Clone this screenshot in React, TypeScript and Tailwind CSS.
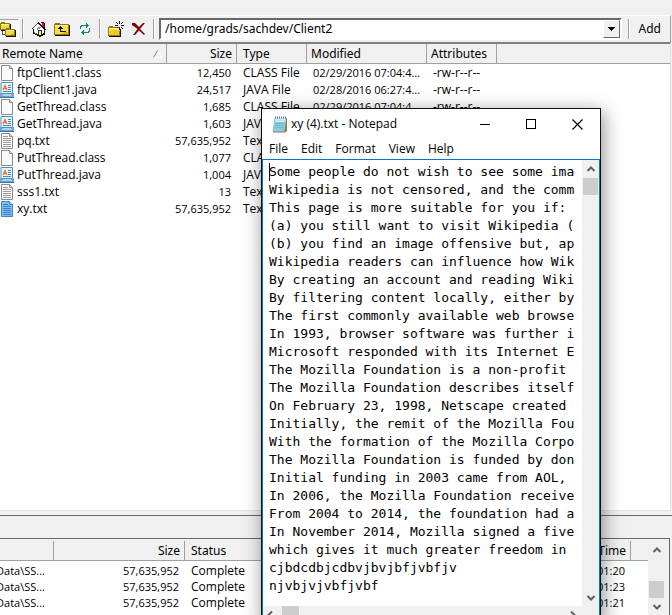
import React from 'react';

type FileKind = 'blank' | 'java' | 'text' | 'selected';

type RemoteFile = {
  name: string;
  kind: FileKind;
  size: string;
  type: string;
  modified: string;
};

const files: RemoteFile[] = [
  { name: 'ftpClient1.class', kind: 'blank', size: '12,450', type: 'CLASS File', modified: '02/29/2016 07:04:4...' },
  { name: 'ftpClient1.java', kind: 'java', size: '24,517', type: 'JAVA File', modified: '02/28/2016 06:27:4...' },
  { name: 'GetThread.class', kind: 'blank', size: '1,685', type: 'CLASS File', modified: '02/29/2016 07:04:4...' },
  { name: 'GetThread.java', kind: 'java', size: '1,603', type: 'JAVA File', modified: '' },
  { name: 'pq.txt', kind: 'text', size: '57,635,952', type: 'Text', modified: '' },
  { name: 'PutThread.class', kind: 'blank', size: '1,077', type: 'CLASS', modified: '' },
  { name: 'PutThread.java', kind: 'java', size: '1,004', type: 'JAVA File', modified: '' },
  { name: 'sss1.txt', kind: 'text', size: '13', type: 'Text', modified: '' },
  { name: 'xy.txt', kind: 'selected', size: '57,635,952', type: 'Text', modified: '' },
];

const transfers = ['01:20', '01:23', '01:21'];

const documentText = [
  'Some people do not wish to see some ima',
  'Wikipedia is not censored, and the comm',
  'This page is more suitable for you if:',
  '(a) you still want to visit Wikipedia (',
  '(b) you find an image offensive but, ap',
  'Wikipedia readers can influence how Wik',
  'By creating an account and reading Wiki',
  'By filtering content locally, either by',
  'The first commonly available web browse',
  'In 1993, browser software was further i',
  'Microsoft responded with its Internet E',
  'The Mozilla Foundation is a non-profit',
  'The Mozilla Foundation describes itself',
  'On February 23, 1998, Netscape created',
  'Initially, the remit of the Mozilla Fou',
  'With the formation of the Mozilla Corpo',
  'The Mozilla Foundation is funded by don',
  'Initial funding in 2003 came from AOL,',
  'In 2006, the Mozilla Foundation receive',
  'From 2004 to 2014, the foundation had a',
  'In November 2014, Mozilla signed a five',
  'which gives it much greater freedom in',
  'cjbdcdbjcdbvjbvjbfjvbfjv',
  'njvbjvjvbfjvbf',
].join('\n');

function FileIcon({ kind }: { kind: FileKind }) {
  if (kind === 'java') {
    return (
      <svg width="14" height="16" viewBox="0 0 14 16" aria-hidden="true">
        <path d="M1 .5h11.500v11H1z" fill="#eaf5fd" stroke="#4a8fc4" />
        <path d="M0 11h2l1 1.500h8L12 11h2v4H0z" fill="#6aa6d3" />
        <path d="M0 15h14v1H0z" fill="#3b719f" />
        <path d="M2 13.500h10" stroke="#a9d0ec" />
        <path d="M3 8l2-4.500L7 8M4 6.500h2" fill="none" stroke="#f07818" strokeWidth="1.300" />
        <path d="M8 3.500h3M8 5.500h3M8 7.500h3M3 9.500h8" stroke="#4f86b8" />
      </svg>
    );
  }
  const selected = kind === 'selected';
  const edge = selected ? '#3d86cc' : '#8a8a8a';
  return (
    <svg width="14" height="16" viewBox="0 0 14 16" aria-hidden="true">
      <path d="M1.500 .5h8l3 3v12h-11z" fill={selected ? '#7fbdf2' : '#fbfbfb'} stroke={edge} />
      <path d="M9.500 .5v3h3" fill={selected ? '#b9dcf8' : '#ddd'} stroke={edge} />
      {kind !== 'blank' && (
        <path
          d="M3 3.500h5M3 5.500h8M3 7.500h8M3 9.500h8M3 11.500h8M3 13.500h8"
          stroke={selected ? '#3f82bd' : '#9b9b9b'}
          shapeRendering="crispEdges"
        />
      )}
    </svg>
  );
}

function FoldersIcon() {
  return (
    <svg width="16" height="16" viewBox="0 0 16 16" shapeRendering="crispEdges" aria-hidden="true">
      <path d="M0 2h1V1h4v1h5v7H0z" fill="#8c7a10" />
      <path d="M1 3h8v5H1z" fill="#f8d93a" />
      <path d="M1 3h8v1H1z" fill="#fff3a0" />
      <path d="M10 3h1v7H1V9h9z" fill="#111" />
      <path d="M5 8h1V7h4v1h5v7H5z" fill="#8c7a10" />
      <path d="M6 9h8v5H6z" fill="#f8d93a" />
      <path d="M6 9h8v1H6z" fill="#fff3a0" />
      <path d="M11 13h3v1h-3z" fill="#d8a800" />
      <path d="M15 9h1v7H6v-1h9z" fill="#111" />
      <path d="M2 10h1v3h2v1H2z" fill="#555" />
    </svg>
  );
}

function HomeIcon() {
  return (
    <svg width="16" height="16" viewBox="0 0 16 16" shapeRendering="crispEdges" aria-hidden="true">
      <path d="M10 1h3v1h-3zM13 2h1v5h-1z" fill="#500010" />
      <path d="M11 2h2v5h-2z" fill="#d81038" />
      <path d="M7 2h1v1h1v1h1v1h1v1h1v1h1v7h-2v1H7v-1H5v-1H3V7h1V6h1V5h1V4h1z" fill="#fff" />
      <path
        d="M7 1h1v1h1v1h1v1h1v1h1v1h1v1h1v1h1v1h-1v5h-2v1h-2v1H8v-1H6v-1H4v-1H2V8H1V7h1v1h1v4h2v1h2v1h3v-1h2v-1h1V8h-1V7h-1V6h-1V5H9V4H8V3H7z"
        fill="#111"
      />
      <path d="M6 2h1v1H6zM5 3h1v1H5zM4 4h1v1H4zM3 5h1v1H3zM2 6h1v1H2z" fill="#555" />
      <path d="M7 6h3v1H7zM6 7h1v2H6zM7 7h2v1H7z" fill="#909090" />
      <path d="M7 9h4v5H7z" fill="#222" />
      <path d="M8 10h2v4H8z" fill="#fff27a" />
      <path d="M3 11h1v1H3zM4 12h2v1H4z" fill="#4ca030" />
    </svg>
  );
}

function FolderUpIcon() {
  return (
    <svg width="16" height="16" viewBox="0 0 16 16" shapeRendering="crispEdges" aria-hidden="true">
      <path d="M0 3h1V2h5v1h9v11H0z" fill="#8c7a10" />
      <path d="M1 4h13v9H1z" fill="#f8de48" />
      <path d="M1 4h13v1H1z" fill="#fff5b0" />
      <path d="M10 11h4v2H8v-1h2z" fill="#e8b800" />
      <path d="M15 4h1v11H1v-1h14z" fill="#111" />
      <path d="M6 5h1v1h1v1h1v1H7v2h5v1H6V8H4V7h1V6h1z" fill="#111" />
    </svg>
  );
}

function RefreshIcon() {
  return (
    <svg width="12" height="12" viewBox="0 0 12 12" shapeRendering="crispEdges" aria-hidden="true">
      <path
        d="M2 2h5V0h1v1h1v1h1v1H9v1H8v1H7V3H3v1H2v2H1V3h1zM10 5h1v4h-1v1H5v2H4v-1H3v-1H2V9h1V8h1V7h1v2h4V8h1z"
        fill="#108888"
      />
    </svg>
  );
}

function NewFolderIcon() {
  return (
    <svg width="16" height="16" viewBox="0 0 16 16" shapeRendering="crispEdges" aria-hidden="true">
      <path d="M0 6h1V5h4v1h7v9H0z" fill="#8c7a10" />
      <path d="M1 7h10v7H1z" fill="#f8de48" />
      <path d="M1 7h10v1H1z" fill="#fff5b0" />
      <path d="M3 9h9l-2 5H1z" fill="#f3c820" />
      <path d="M12 8h1v8H1v-1h11z" fill="#111" />
      <path
        d="M11 0h1v3h-1zM11 6h1v3h-1zM7 4h3v1H7zM13 4h3v1h-3zM8 1h1v1H8zM9 2h1v1H9zM14 1h1v1h-1zM13 2h1v1h-1zM9 6h1v1H9zM13 6h1v1h-1zM14 7h1v1h-1z"
        fill="#111"
      />
    </svg>
  );
}

function DeleteIcon() {
  return (
    <svg width="14" height="13" viewBox="0 0 14 13" aria-hidden="true">
      <path d="M0 0h3l4 4 4-4h2L8 6l5 5-1 1-5-4.500L3 12H1l4.500-6L0 2z" fill="#800008" />
    </svg>
  );
}

function NotepadIcon() {
  return (
    <svg width="16" height="17" viewBox="0 0 16 17" aria-hidden="true">
      <path d="M3 2h12v13l-2 1.500H1z" fill="#8a7a50" />
      <path d="M2.500 2h12l-2 13.500H.5z" fill="#8ecbdc" />
      <path d="M3.500 2h10l-.5 4H3z" fill="#c9e9f1" />
      <path d="M3 7.500h9M2.500 9.500h9M2.500 11.500h9" stroke="#68afc6" strokeWidth=".6" />
      <path d="M3 1.500h12" stroke="#5c6a70" strokeWidth="2" strokeDasharray="1 1" />
    </svg>
  );
}

function Chevron({ direction }: { direction: 'up' | 'down' | 'left' | 'right' }) {
  const paths = {
    up: 'M1.500 7L5 3.500 8.500 7',
    down: 'M1.500 3L5 6.500 8.500 3',
    left: 'M7 1.500L3.500 5 7 8.500',
    right: 'M3 1.500L6.500 5 3 8.500',
  };
  return (
    <svg width="10" height="10" viewBox="0 0 10 10" aria-hidden="true">
      <path d={paths[direction]} fill="none" stroke="#5f5f5f" strokeWidth="2" />
    </svg>
  );
}

function Separator() {
  return <div className="h-5 w-0.5 shrink-0 border-l border-[#a0a0a0] bg-white" />;
}

function ToolButton({ label, children }: { label: string; children: React.ReactNode }) {
  return (
    <button type="button" aria-label={label} className="flex h-5 w-[23px] shrink-0 items-center justify-center">
      {children}
    </button>
  );
}

function Toolbar() {
  return (
    <div className="mr-px flex h-[27px] items-center border-t border-r border-t-white border-r-[#a0a0a0]">
      <button
        type="button"
        aria-label="Synchronize folders"
        className="flex h-5 w-[19px] shrink-0 items-center border-t border-r border-b border-t-[#a0a0a0] border-r-white border-b-white bg-[#f8f8f8]"
      >
        <FoldersIcon />
      </button>
      <div className="ml-[3px] flex items-center gap-[3px]">
        <Separator />
        <div className="flex items-center">
          <ToolButton label="Home"><HomeIcon /></ToolButton>
          <ToolButton label="Up one level"><FolderUpIcon /></ToolButton>
          <ToolButton label="Refresh"><RefreshIcon /></ToolButton>
        </div>
        <Separator />
        <div className="flex items-center">
          <ToolButton label="New folder"><NewFolderIcon /></ToolButton>
          <ToolButton label="Delete"><DeleteIcon /></ToolButton>
        </div>
        <Separator />
      </div>
      <div className="relative ml-1 h-[22px] flex-1 border-2 border-t-[#696969] border-r-white border-b-white border-l-[#696969] bg-white">
        <select
          aria-label="Remote path"
          className="block h-full w-full appearance-none bg-white pl-1 font-['Noto_Sans',sans-serif] text-[12px] leading-4 outline-none"
        >
          <option>/home/grads/sachdev/Client2</option>
        </select>
        <span className="pointer-events-none absolute top-0 right-0 flex h-[18px] w-[17px] items-center justify-center border border-t-white border-r-[#696969] border-b-[#696969] border-l-white bg-[#f0f0f0]">
          <svg width="7" height="4" viewBox="0 0 7 4" shapeRendering="crispEdges" aria-hidden="true">
            <path d="M0 0h7v1H6v1H5v1H4v1H3V3H2V2H1V1H0z" fill="#000" />
          </svg>
        </span>
      </div>
      <div className="ml-1.5 flex items-center">
        <Separator />
        <button type="button" className="px-[9px] font-['Noto_Sans',sans-serif] text-[12px] leading-4">Add</button>
      </div>
    </div>
  );
}

const headCell = "border-b border-[#a0a0a0] p-0 font-['Noto_Sans',sans-serif] text-[12px] leading-4 font-normal";

function RemoteList() {
  return (
    <div className="mr-px flex-1 border-t-2 border-r border-b border-t-[#808080] border-r-[#e3e3e3] border-b-[#e3e3e3] bg-white">
      <table className="w-full table-fixed border-separate border-spacing-0 whitespace-nowrap">
        <colgroup>
          <col className="w-[167px]" />
          <col className="w-[70px]" />
          <col className="w-[70px]" />
          <col className="w-[120px]" />
          <col className="w-[70px]" />
          <col />
        </colgroup>
        <thead>
          <tr className="h-5 bg-[#f0f0f0] text-left">
            <th className={`${headCell} border-r pl-0.5`}>
              <span className="flex items-center justify-between pr-1">
                Remote Name
                <svg width="9" height="8" viewBox="0 0 9 8" aria-hidden="true">
                  <path d="M4.500 .5l4 7H.5" fill="none" stroke="#fff" />
                  <path d="M.5 7.500l4-7" stroke="#808080" />
                </svg>
              </span>
            </th>
            <th className={`${headCell} border-r pr-1 text-right`}>Size</th>
            <th className={`${headCell} border-r pl-1.5`}>Type</th>
            <th className={`${headCell} border-r pl-1`}>Modified</th>
            <th className={`${headCell} border-r pl-1`}>Attributes</th>
            <th className={headCell} aria-label="Unused" />
          </tr>
        </thead>
        <tbody>
          {files.map((file) => (
            <tr key={file.name} className="h-[17px]">
              <td className="p-0">
                <span className="flex h-[17px] items-center gap-[3px]">
                  <FileIcon kind={file.kind} />
                  {file.name}
                </span>
              </td>
              <td className="p-0 pr-1.5 text-right text-[11px]">{file.size}</td>
              <td className="overflow-hidden p-0 pl-1.5">{file.type}</td>
              <td className="p-0 pl-1.5 text-[11px]">{file.modified}</td>
              <td className="p-0 pl-1.5">{file.modified && '-rw-r--r--'}</td>
              <td className="p-0" />
            </tr>
          ))}
        </tbody>
      </table>
    </div>
  );
}

function TransferPane() {
  return (
    <div className="mr-0.5 flex h-[77px] border-t border-r border-[#696969] bg-white">
      <div className="min-w-0 flex-1 overflow-hidden border-t-2 border-[#f0f0f0]">
        <table className="w-full table-fixed border-separate border-spacing-0 whitespace-nowrap">
          <colgroup>
            <col className="w-[54px]" />
            <col className="w-[131px]" />
            <col />
            <col className="w-[60px]" />
            <col className="w-[17px]" />
          </colgroup>
          <thead>
            <tr className="h-5 bg-[#f0f0f0] text-left">
              <th className={`${headCell} border-r`} aria-label="Local file" />
              <th className={`${headCell} border-r pr-1 text-right`}>Size</th>
              <th className={`${headCell} border-r pl-1.5`}>Status</th>
              <th className={`${headCell} border-r pr-1 text-right`}>Time</th>
              <th className={headCell} aria-label="Unused" />
            </tr>
          </thead>
          <tbody>
            <tr className="h-0.5"><td colSpan={5} className="p-0" /></tr>
            {transfers.map((time) => (
              <tr key={time} className="h-4">
                <td className="p-0 text-[11px]">
                  <span className="flex justify-end overflow-hidden pr-[9px]">Data\SS...</span>
                </td>
                <td className="p-0 pr-1.5 text-right text-[11px]">57,635,952</td>
                <td className="p-0 pl-1.5">Complete</td>
                <td className="p-0 pr-1.5 text-right text-[11px]">{time}</td>
                <td className="p-0" />
              </tr>
            ))}
          </tbody>
        </table>
      </div>
      <div className="flex w-[17px] flex-col items-center bg-[#f0f0f0] pt-1.5">
        <Chevron direction="up" />
        <div className="mt-[26px] mb-1 h-[17px] w-[15px] shrink-0 bg-[#cdcdcd]" />
        <Chevron direction="down" />
      </div>
      <div className="w-1 bg-[#f0f0f0]" />
    </div>
  );
}

function NotepadWindow() {
  return (
    <section
      aria-label="Notepad"
      className="absolute top-[108px] left-[261px] w-[340px] border border-[#111] bg-white shadow-[2px_4px_18px_rgba(0,0,0,0.45)]"
    >
      <div className="flex h-[30px] items-center pl-2.5">
        <NotepadIcon />
        <h1 className="pl-[3px] text-[12px] leading-4">xy (4).txt - Notepad</h1>
        <div className="ml-auto flex">
          <button type="button" aria-label="Minimize" className="flex h-7 w-[46px] items-center justify-center">
            <span className="h-px w-2.5 bg-black" />
          </button>
          <button type="button" aria-label="Maximize" className="flex h-7 w-[46px] items-center justify-center">
            <span className="h-2.5 w-2.5 border border-black" />
          </button>
          <button type="button" aria-label="Close" className="flex h-7 w-[46px] items-center justify-center">
            <svg width="11" height="11" viewBox="0 0 11 11" aria-hidden="true">
              <path d="M.5 .5l10 10M10.500 .5l-10 10" stroke="#000" strokeWidth="1.200" />
            </svg>
          </button>
        </div>
      </div>
      <nav className="flex h-5 items-center gap-[13px] pl-[7px] text-[12px] leading-4">
        <button type="button">File</button>
        <button type="button">Edit</button>
        <button type="button">Format</button>
        <button type="button">View</button>
        <button type="button">Help</button>
      </nav>
      <div className="border border-[#0078d7]">
        <div className="flex">
          <div className="relative flex-1 pt-[3px] pr-1 pb-[11px] pl-1.5">
            <textarea
              aria-label="Document text"
              wrap="off"
              spellCheck={false}
              rows={24}
              defaultValue={documentText}
              className="block h-[432px] w-full resize-none overflow-hidden bg-white font-['DejaVu_Sans_Mono',monospace] text-[13px] leading-[18px] whitespace-pre outline-none"
            />
            <span className="absolute top-[3px] left-1.5 h-[18px] w-px bg-black" />
          </div>
          <div className="flex w-[17px] flex-col items-center bg-[#f0f0f0] pt-1">
            <Chevron direction="up" />
            <div className="mt-1 h-[17px] w-[15px] bg-[#cdcdcd]" />
            <div className="mt-auto flex h-[17px] items-center">
              <Chevron direction="down" />
            </div>
          </div>
        </div>
        <div className="flex h-[17px] items-center bg-[#f0f0f0] pl-0.5">
          <Chevron direction="left" />
          <div className="ml-[7px] h-[17px] w-[17px] bg-[#cdcdcd]" />
          <div className="mr-[21px] ml-auto flex">
            <Chevron direction="right" />
          </div>
        </div>
      </div>
    </section>
  );
}

export default function App() {
  return (
    <main className="relative flex h-screen flex-col overflow-hidden bg-[#f0f0f0] pt-[15px] font-['Open_Sans','Noto_Sans',sans-serif] text-[12px] leading-4 text-black">
      <Toolbar />
      <RemoteList />
      <div className="mt-1 h-[23px] border-t border-[#696969]" />
      <TransferPane />
      <NotepadWindow />
    </main>
  );
}
